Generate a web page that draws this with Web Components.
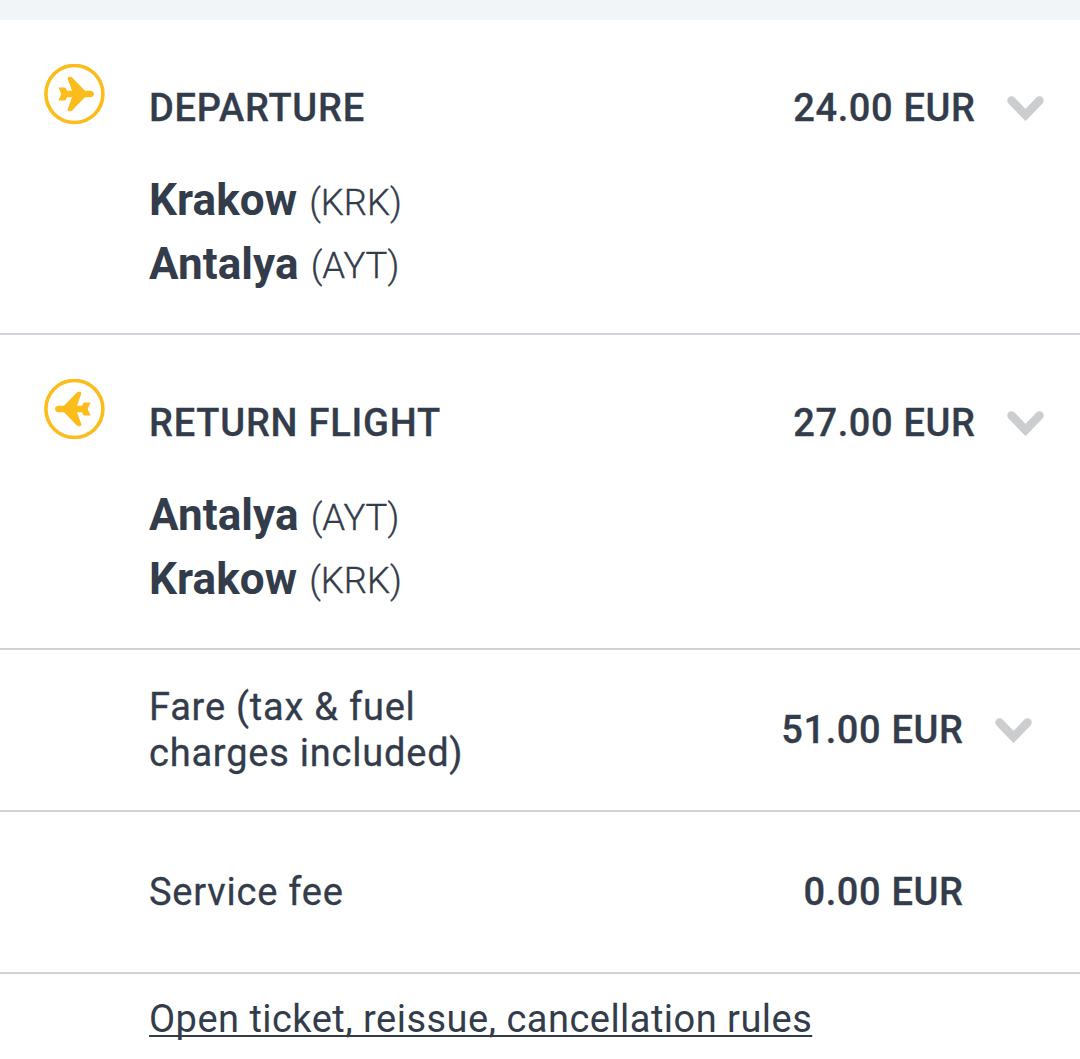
<!DOCTYPE html>
<html><head><meta charset="utf-8">
<style>
html,body{margin:0;padding:0;background:#fff;overflow:hidden}
body{width:1080px;height:1059px;font-family:Roboto,"Liberation Sans",sans-serif;color:#333c4b}
</style></head><body>
<template id="t-flight">
<style>
:host{display:block;box-sizing:border-box;height:315px;border-bottom:2px solid #ccd2d8;position:relative}
.head{display:flex;align-items:center;height:36px;padding:0 36px 0 149px}
.wrap{padding-top:70px}
.title,.price{font-size:38px;font-weight:500;line-height:36px;letter-spacing:.78px;-webkit-text-stroke:.3px}
.title{flex:1}
.price{letter-spacing:.65px;margin-right:-.65px}
.chev{margin-left:32px;display:block}
.cities{padding:43px 0 0 149px;display:flex;flex-direction:column}
.icon{position:absolute;left:44px;top:44px}
</style>
<svg class="icon" width="61" height="61" viewBox="0 0 61 61"><circle cx="30.400" cy="30" r="28.500" fill="none" stroke="#fbbc1c" stroke-width="3.600"/><g id="plane"><path fill="#fbbc1c" d="M14.500 23.500h6c.6 0 1 .3 1.300.8L23 26.700h5L23.800 15C23.400 13.700 24 12.700 25.300 12.700h1.200c.7 0 1.200.3 1.600.8L41 26.700h5C48.500 26.700 50 28.200 50 30s-1.500 3.300-4 3.300h-5L28.100 46.500c-.4.5-.9.8-1.600.8h-1.200C24 47.300 23.400 46.300 23.800 45L28 33.300h-5l-1.200 2.400c-.3.5-.7.8-1.300.8h-6l2.800-6.500z"/></g></svg>
<div class="wrap"><div class="head"><span class="title"><slot name="title"></slot></span><span class="price"><slot name="price"></slot></span><svg class="chev" width="37" height="25" viewBox="0 0 37 25"><path d="M4.500 4.500L18.500 19L32.500 4.500" fill="none" stroke="#cbcdcf" stroke-width="8.500" stroke-linecap="round"/></svg></div>
<div class="cities"><slot></slot></div></div>
</template>
<template id="t-city">
<style>
:host{display:block;height:63px;line-height:63px;white-space:nowrap}
:host([second]) b{position:relative;top:1px}
b{font-size:44px;font-weight:700;letter-spacing:.1px}
span{font-size:36.500px;font-weight:300;margin-left:8px;-webkit-text-stroke:.35px}
</style><b><slot></slot></b> <span>(<slot name="code"></slot>)</span>
</template>
<template id="t-row">
<style>
:host{display:block;box-sizing:border-box;height:162px;border-bottom:2px solid #ccd2d8;font-size:38px}
.r{display:flex;align-items:center;height:160px;padding:0 48px 0 149px}
.l{flex:1;line-height:46px;letter-spacing:.78px;-webkit-text-stroke:.3px}
.p{font-weight:500;letter-spacing:.65px;margin-right:-.65px;-webkit-text-stroke:.3px}
</style>
<div class="r"><div class="l"><slot></slot></div><div class="p"><slot name="price"></slot></div><slot name="chev"></slot></div>
</template>
<template id="t-chev">
<style>:host{display:block;margin-left:32px;width:37px;height:25px}svg{display:block}</style>
<svg width="37" height="25" viewBox="0 0 37 25"><path d="M4.500 4.500L18.500 19L32.500 4.500" fill="none" stroke="#cbcdcf" stroke-width="8.500" stroke-linecap="round"/></svg>
</template>
<template id="t-top"><style>:host{display:block;height:20px;background:#f2f5f8}</style></template>
<template id="t-link">
<style>:host{display:block;padding:23px 0 0 149px;font-size:38px;line-height:44px;letter-spacing:.47px}a{color:inherit;text-decoration:underline;text-decoration-thickness:2px;text-underline-offset:3px;text-decoration-skip-ink:none}</style>
<a><slot></slot></a>
</template>
<script>
const def=(n,t,f)=>customElements.define(n,class extends HTMLElement{constructor(){super();const r=this.attachShadow({mode:'open'});r.appendChild(document.getElementById(t).content.cloneNode(true));}connectedCallback(){if(f)f(this)}});
def('top-strip','t-top');
def('flight-card','t-flight',e=>{if(e.hasAttribute('return'))e.shadowRoot.getElementById('plane').setAttribute('transform','rotate(180 30.500 30)')});
def('city-line','t-city');
def('fare-row','t-row');
def('chev-down','t-chev');
def('rules-link','t-link');
</script>
<top-strip></top-strip>
<flight-card>
<span slot="title">DEPARTURE</span><span slot="price">24.00 EUR</span>
<city-line>Krakow<span slot="code">KRK</span></city-line>
<city-line second>Antalya<span slot="code">AYT</span></city-line>
</flight-card>
<flight-card return>
<span slot="title">RETURN FLIGHT</span><span slot="price">27.00 EUR</span>
<city-line>Antalya<span slot="code">AYT</span></city-line>
<city-line second>Krakow<span slot="code">KRK</span></city-line>
</flight-card>
<fare-row>Fare (tax &amp; fuel<br>charges included)<span slot="price">51.00 EUR</span><chev-down slot="chev"></chev-down></fare-row>
<fare-row>Service fee<span slot="price">0.00 EUR</span><span slot="chev" style="display:block;width:69px"></span></fare-row>
<rules-link>Open ticket, reissue, cancellation rules</rules-link>
</body></html>
